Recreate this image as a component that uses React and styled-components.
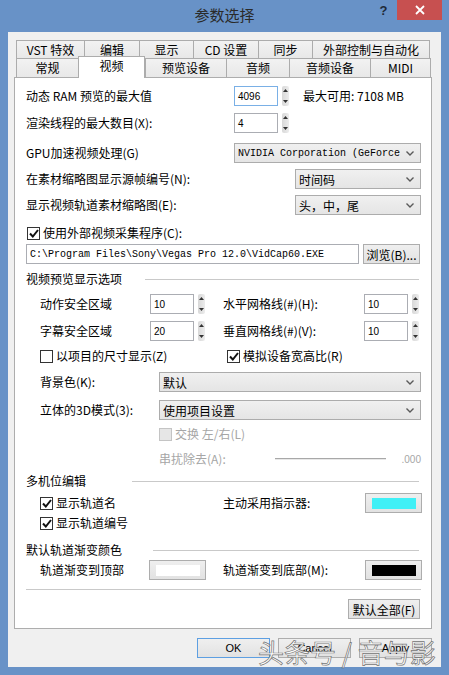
import React from 'react';
import styled, { createGlobalStyle } from 'styled-components';

const UI_FONT = `"Noto Sans CJK SC", "Liberation Sans", sans-serif`;
const MONO_FONT = `"Liberation Mono", "Noto Sans CJK SC", monospace`;
const NUM_FONT = `"Liberation Sans", "Noto Sans CJK SC", sans-serif`;

const Global = createGlobalStyle`
  html, body { margin: 0; padding: 0; background: #6892c7; overflow: hidden; }
  * { box-sizing: border-box; }
`;

const Frame = styled.div`
  position: relative;
  width: 449px;
  height: 675px;
  display: flex;
  flex-direction: column;
  background: #6892c7;
  font-family: ${UI_FONT};
  font-size: 12px;
  color: #000;
`;

const TitleBar = styled.div`
  height: 32px;
  flex-shrink: 0;
  display: grid;
  grid-template-columns: 1fr auto 1fr;
  align-items: start;
`;

const Title = styled.div`
  grid-column: 2;
  padding-top: 5px;
  font-size: 15px;
  line-height: 20px;
  color: #2a2a2a;
`;

const WindowControls = styled.div`
  grid-column: 3;
  justify-self: end;
  display: flex;
  margin-right: 7px;
`;

const HelpButton = styled.div`
  width: 27px;
  height: 20px;
  display: flex;
  align-items: center;
  justify-content: center;
  font-family: ${NUM_FONT};
  font-weight: bold;
  font-size: 13px;
  color: #1f2a3a;
`;

const CloseButton = styled.div`
  width: 45px;
  height: 20px;
  background: #c75050;
  display: flex;
  align-items: center;
  justify-content: center;
`;

const Client = styled.div`
  flex: 1;
  margin: 0 8px 8px 8px;
  background: #f0f0f0;
  display: flex;
  flex-direction: column;
  padding: 8px 9px 9px 6px;
`;

const TabRow = styled.div`
  display: flex;
  align-items: flex-end;
  height: ${(p) => p.$h}px;
  margin-left: 2px;
`;

const Tab = styled.div`
  position: relative;
  width: ${(p) => p.$w}px;
  height: ${(p) => (p.$active ? p.$h + 3 : p.$h)}px;
  margin-bottom: ${(p) => (p.$active ? -1 : 0)}px;
  z-index: ${(p) => (p.$active ? 2 : 0)};
  display: flex;
  align-items: ${(p) => (p.$active ? 'flex-start' : 'center')};
  justify-content: center;
  padding-top: ${(p) => (p.$active ? 1 : 0)}px;
  border: 1px solid #acacac;
  border-right: ${(p) => (p.$last || p.$active ? '1px solid #acacac' : 'none')};
  border-bottom: none;
  background: ${(p) => (p.$active ? '#ffffff' : 'linear-gradient(#f2f2f2, #e8e8e8)')};
  font-size: 12px;
  line-height: 16px;
  white-space: nowrap;
`;

const Panel = styled.div`
  position: relative;
  z-index: 1;
  background: #fff;
  border: 1px solid #adadad;
  padding: 8px 10px 9px 11px;
  display: flex;
  flex-direction: column;
`;

const Row = styled.div`
  display: flex;
  align-items: center;
  height: ${(p) => p.$h}px;
  margin-top: ${(p) => p.$mt}px;
  padding-left: ${(p) => p.$indent || 0}px;
  justify-content: ${(p) => p.$justify || 'flex-start'};
`;

const Label = styled.div`
  width: ${(p) => (p.$w ? `${p.$w}px` : 'auto')};
  margin-left: ${(p) => p.$ml || 0}px;
  flex-shrink: 0;
  white-space: nowrap;
  line-height: 16px;
  color: ${(p) => (p.$disabled ? '#a6a6a6' : '#000')};
`;

const SpinField = styled.div`
  width: 44px;
  height: 20px;
  border: 1px solid ${(p) => (p.$focused ? '#7ab0e6' : '#abadb3')};
  background: #fff;
  padding-left: 3px;
  display: flex;
  align-items: center;
  font-family: ${NUM_FONT};
  font-size: 10px;
`;

const SpinArrows = styled.div`
  width: 7px;
  height: 20px;
  margin-left: 4px;
  border-radius: 2px;
  background: linear-gradient(90deg, #d8d8d8, #ececec);
  display: flex;
  flex-direction: column;
  align-items: center;
  justify-content: space-between;
  padding: 3px 0;
`;

const Info = styled.div`
  margin-left: 14px;
  white-space: nowrap;
  line-height: 16px;
`;

const Combo = styled.div`
  flex: 1;
  height: 20px;
  border: 1px solid #acacac;
  background: linear-gradient(#f0f0f0, #e5e5e5);
  display: flex;
  align-items: center;
  padding: 0 6px 0 3px;
  font-family: ${(p) => (p.$mono ? MONO_FONT : UI_FONT)};
  font-size: ${(p) => (p.$mono ? 10 : 12)}px;
  white-space: nowrap;
  overflow: hidden;
`;

const ComboText = styled.span`
  flex: 1;
  overflow: hidden;
`;

const TextField = styled.div`
  flex: 1;
  height: 20px;
  border: 1px solid #abadb3;
  background: #fff;
  display: flex;
  align-items: center;
  padding-left: 3px;
  font-family: ${MONO_FONT};
  font-size: 10px;
  white-space: nowrap;
`;

const PushButton = styled.div`
  width: ${(p) => p.$w}px;
  height: 20px;
  margin-left: ${(p) => p.$ml || 0}px;
  flex-shrink: 0;
  border: 1px solid ${(p) => (p.$default ? '#5d9fe2' : '#adadad')};
  background: linear-gradient(#efefef, #e2e2e2);
  display: flex;
  align-items: center;
  justify-content: center;
  white-space: nowrap;
  font-family: ${(p) => (p.$latin ? NUM_FONT : UI_FONT)};
  font-size: ${(p) => (p.$latin ? 11 : 12)}px;
`;

const Swatch = styled.div`
  width: 44px;
  height: 11px;
  background: ${(p) => p.$color};
`;

const CheckItem = styled.div`
  width: ${(p) => (p.$w ? `${p.$w}px` : 'auto')};
  margin-left: ${(p) => p.$ml || 0}px;
  flex-shrink: 0;
  display: flex;
  align-items: center;
  gap: 3px;
  white-space: nowrap;
  color: ${(p) => (p.$disabled ? '#a6a6a6' : '#000')};
  line-height: 16px;
`;

const Box = styled.div`
  width: 13px;
  height: 13px;
  border: 1px solid ${(p) => (p.$disabled ? '#c4c4c4' : '#333')};
  background: ${(p) => (p.$disabled ? '#e6e6e6' : '#fff')};
  display: flex;
  align-items: center;
  justify-content: center;
`;

const GroupTitle = styled.div`
  width: ${(p) => p.$w}px;
  flex-shrink: 0;
  white-space: nowrap;
  line-height: 16px;
`;

const Rule = styled.div`
  flex: 1;
  height: 1px;
  margin-right: 2px;
  background: #c9c9c9;
`;

const SliderTrack = styled.div`
  width: 111px;
  height: 2px;
  flex-shrink: 0;
  border-top: 1px solid #a8a8a8;
  border-bottom: 1px solid #e8e8e8;
`;

const SliderValue = styled.div`
  margin-left: auto;
  color: #a6a6a6;
  font-family: ${NUM_FONT};
  font-size: 10px;
`;

const Separator = styled.div`
  flex: 1;
  height: 1px;
  background: #c9c9c9;
`;

const ButtonBar = styled.div`
  display: flex;
  justify-content: flex-end;
  gap: 8px;
  margin-top: 9px;
  margin-right: 0;
`;

const Watermark = styled.div`
  position: absolute;
  left: 258px;
  top: 636px;
  font-family: ${UI_FONT};
  font-size: 26px;
  line-height: 32px;
  letter-spacing: 0px;
  color: rgba(255, 255, 255, 0.82);
  -webkit-text-stroke: 0.7px rgba(90, 90, 90, 0.85);
  white-space: pre;
  pointer-events: none;
`;

const Chevron = () => (
  <svg width="8" height="5" viewBox="0 0 8 5">
    <polyline points="0.5,0.5 4,4 7.5,0.5" fill="none" stroke="#5a5a5a" strokeWidth="1.4" />
  </svg>
);

const Check = ({ color = '#111' }) => (
  <svg width="10" height="9" viewBox="0 0 10 9">
    <polyline points="1,4.5 3.8,7.5 9,1" fill="none" stroke={color} strokeWidth="2" />
  </svg>
);

const Arrows = () => (
  <SpinArrows>
    <svg width="5" height="3" viewBox="0 0 5 3"><polygon points="0,3 2.5,0 5,3" fill="#333" /></svg>
    <svg width="5" height="3" viewBox="0 0 5 3"><polygon points="0,0 5,0 2.5,3" fill="#333" /></svg>
  </SpinArrows>
);

const Spin = ({ value, focused }) => (
  <>
    <SpinField $focused={focused}>{value}</SpinField>
    <Arrows />
  </>
);

const Select = ({ children, mono }) => (
  <Combo $mono={mono}>
    <ComboText>{children}</ComboText>
    <Chevron />
  </Combo>
);

const CheckBox = ({ checked, disabled, children, w, ml }) => (
  <CheckItem $w={w} $ml={ml} $disabled={disabled}>
    <Box $disabled={disabled}>{checked && <Check />}</Box>
    <span>{children}</span>
  </CheckItem>
);

const ColorButton = ({ color, ml }) => (
  <PushButton $w={57} $ml={ml}>
    <Swatch $color={color} />
  </PushButton>
);

const backTabs = [
  ['VST 特效', 68],
  ['编辑', 55],
  ['显示', 54],
  ['CD 设置', 65],
  ['同步', 54],
  ['外部控制与自动化', 118],
];

const frontTabs = [
  ['常规', 62],
  ['视频', 67, true],
  ['预览设备', 81],
  ['音频', 63],
  ['音频设备', 81],
  ['MIDI', 61],
];

export default function App() {
  return (
    <Frame>
      <Global />
      <TitleBar>
        <Title>参数选择</Title>
        <WindowControls>
          <HelpButton>?</HelpButton>
          <CloseButton>
            <svg width="10" height="10" viewBox="0 0 10 10">
              <path d="M1 1 L9 9 M9 1 L1 9" stroke="#fff" strokeWidth="1.8" />
            </svg>
          </CloseButton>
        </WindowControls>
      </TitleBar>

      <Client>
        <TabRow $h={18}>
          {backTabs.map(([name, w], i) => (
            <Tab key={name} $w={w} $h={18} $last={i === backTabs.length - 1}>
              {name}
            </Tab>
          ))}
        </TabRow>
        <TabRow $h={19}>
          {frontTabs.map(([name, w, active], i) => (
            <Tab key={name} $w={w} $h={19} $active={active} $last={i === frontTabs.length - 1}>
              {name}
            </Tab>
          ))}
        </TabRow>

        <Panel>
          <Row $h={20} $mt={0}>
            <Label $w={208}>动态 RAM 预览的最大值</Label>
            <Spin value="4096" focused />
            <Info>最大可用: 7108 MB</Info>
          </Row>
          <Row $h={20} $mt={7}>
            <Label $w={208}>渲染线程的最大数目(X):</Label>
            <Spin value="4" />
          </Row>
          <Row $h={20} $mt={10}>
            <Label $w={208}>GPU加速视频处理(G)</Label>
            <Select mono>NVIDIA Corporation (GeForce</Select>
          </Row>
          <Row $h={20} $mt={6}>
            <Label $w={269}>在素材缩略图显示源帧编号(N):</Label>
            <Select>时间码</Select>
          </Row>
          <Row $h={20} $mt={6}>
            <Label $w={269}>显示视频轨道素材缩略图(E):</Label>
            <Select>头，中，尾</Select>
          </Row>
          <Row $h={16} $mt={10} $indent={1}>
            <CheckBox checked>使用外部视频采集程序(C):</CheckBox>
          </Row>
          <Row $h={20} $mt={3}>
            <TextField>{'C:\\Program Files\\Sony\\Vegas Pro 12.0\\VidCap60.EXE'}</TextField>
            <PushButton $w={57} $ml={4}>浏览(B)...</PushButton>
            <Label $w={1} />
          </Row>

          <Row $h={16} $mt={7}>
            <GroupTitle $w={119}>视频预览显示选项</GroupTitle>
            <Rule />
          </Row>
          <Row $h={20} $mt={7} $indent={14}>
            <Label $w={110}>动作安全区域</Label>
            <Spin value="10" />
            <Label $w={141} $ml={18}>水平网格线(#)(H):</Label>
            <Spin value="10" />
          </Row>
          <Row $h={20} $mt={7} $indent={14}>
            <Label $w={110}>字幕安全区域</Label>
            <Spin value="20" />
            <Label $w={141} $ml={18}>垂直网格线(#)(V):</Label>
            <Spin value="10" />
          </Row>
          <Row $h={16} $mt={7} $indent={14}>
            <CheckBox w={187}>以项目的尺寸显示(Z)</CheckBox>
            <CheckBox checked>模拟设备宽高比(R)</CheckBox>
          </Row>
          <Row $h={20} $mt={8} $indent={14}>
            <Label $w={119}>背景色(K):</Label>
            <Select>默认</Select>
          </Row>
          <Row $h={20} $mt={8} $indent={14}>
            <Label $w={119}>立体的3D模式(3):</Label>
            <Select>使用项目设置</Select>
          </Row>
          <Row $h={16} $mt={6} $indent={133}>
            <CheckBox disabled>交换 左/右(L)</CheckBox>
          </Row>
          <Row $h={16} $mt={9} $indent={133}>
            <Label $w={116} $disabled>串扰除去(A):</Label>
            <SliderTrack />
            <SliderValue>.000</SliderValue>
          </Row>

          <Row $h={16} $mt={6}>
            <GroupTitle $w={106}>多机位编辑</GroupTitle>
            <Rule />
          </Row>
          <Row $h={20} $mt={4} $indent={14}>
            <CheckBox checked w={183}>显示轨道名</CheckBox>
            <Label $w={142}>主动采用指示器:</Label>
            <ColorButton color="#40f0f6" />
          </Row>
          <Row $h={16} $mt={2} $indent={14}>
            <CheckBox checked>显示轨道编号</CheckBox>
          </Row>

          <Row $h={16} $mt={11}>
            <GroupTitle $w={127}>默认轨道渐变颜色</GroupTitle>
            <Rule />
          </Row>
          <Row $h={20} $mt={2} $indent={14}>
            <Label $w={109}>轨道渐变到顶部</Label>
            <ColorButton color="#ffffff" />
            <Label $w={142} $ml={17}>轨道渐变到底部(M):</Label>
            <ColorButton color="#000000" />
          </Row>
          <Row $h={1} $mt={9}>
            <Separator />
          </Row>
          <Row $h={20} $mt={9} $justify="flex-end">
            <PushButton $w={72}>默认全部(F)</PushButton>
            <Label $w={1} />
          </Row>
        </Panel>

        <ButtonBar>
          <PushButton $w={73} $latin $default>OK</PushButton>
          <PushButton $w={73} $latin>Cancel</PushButton>
          <PushButton $w={73} $latin>Apply</PushButton>
        </ButtonBar>
      </Client>

      <Watermark>头条号 / 音与影</Watermark>
    </Frame>
  );
}
